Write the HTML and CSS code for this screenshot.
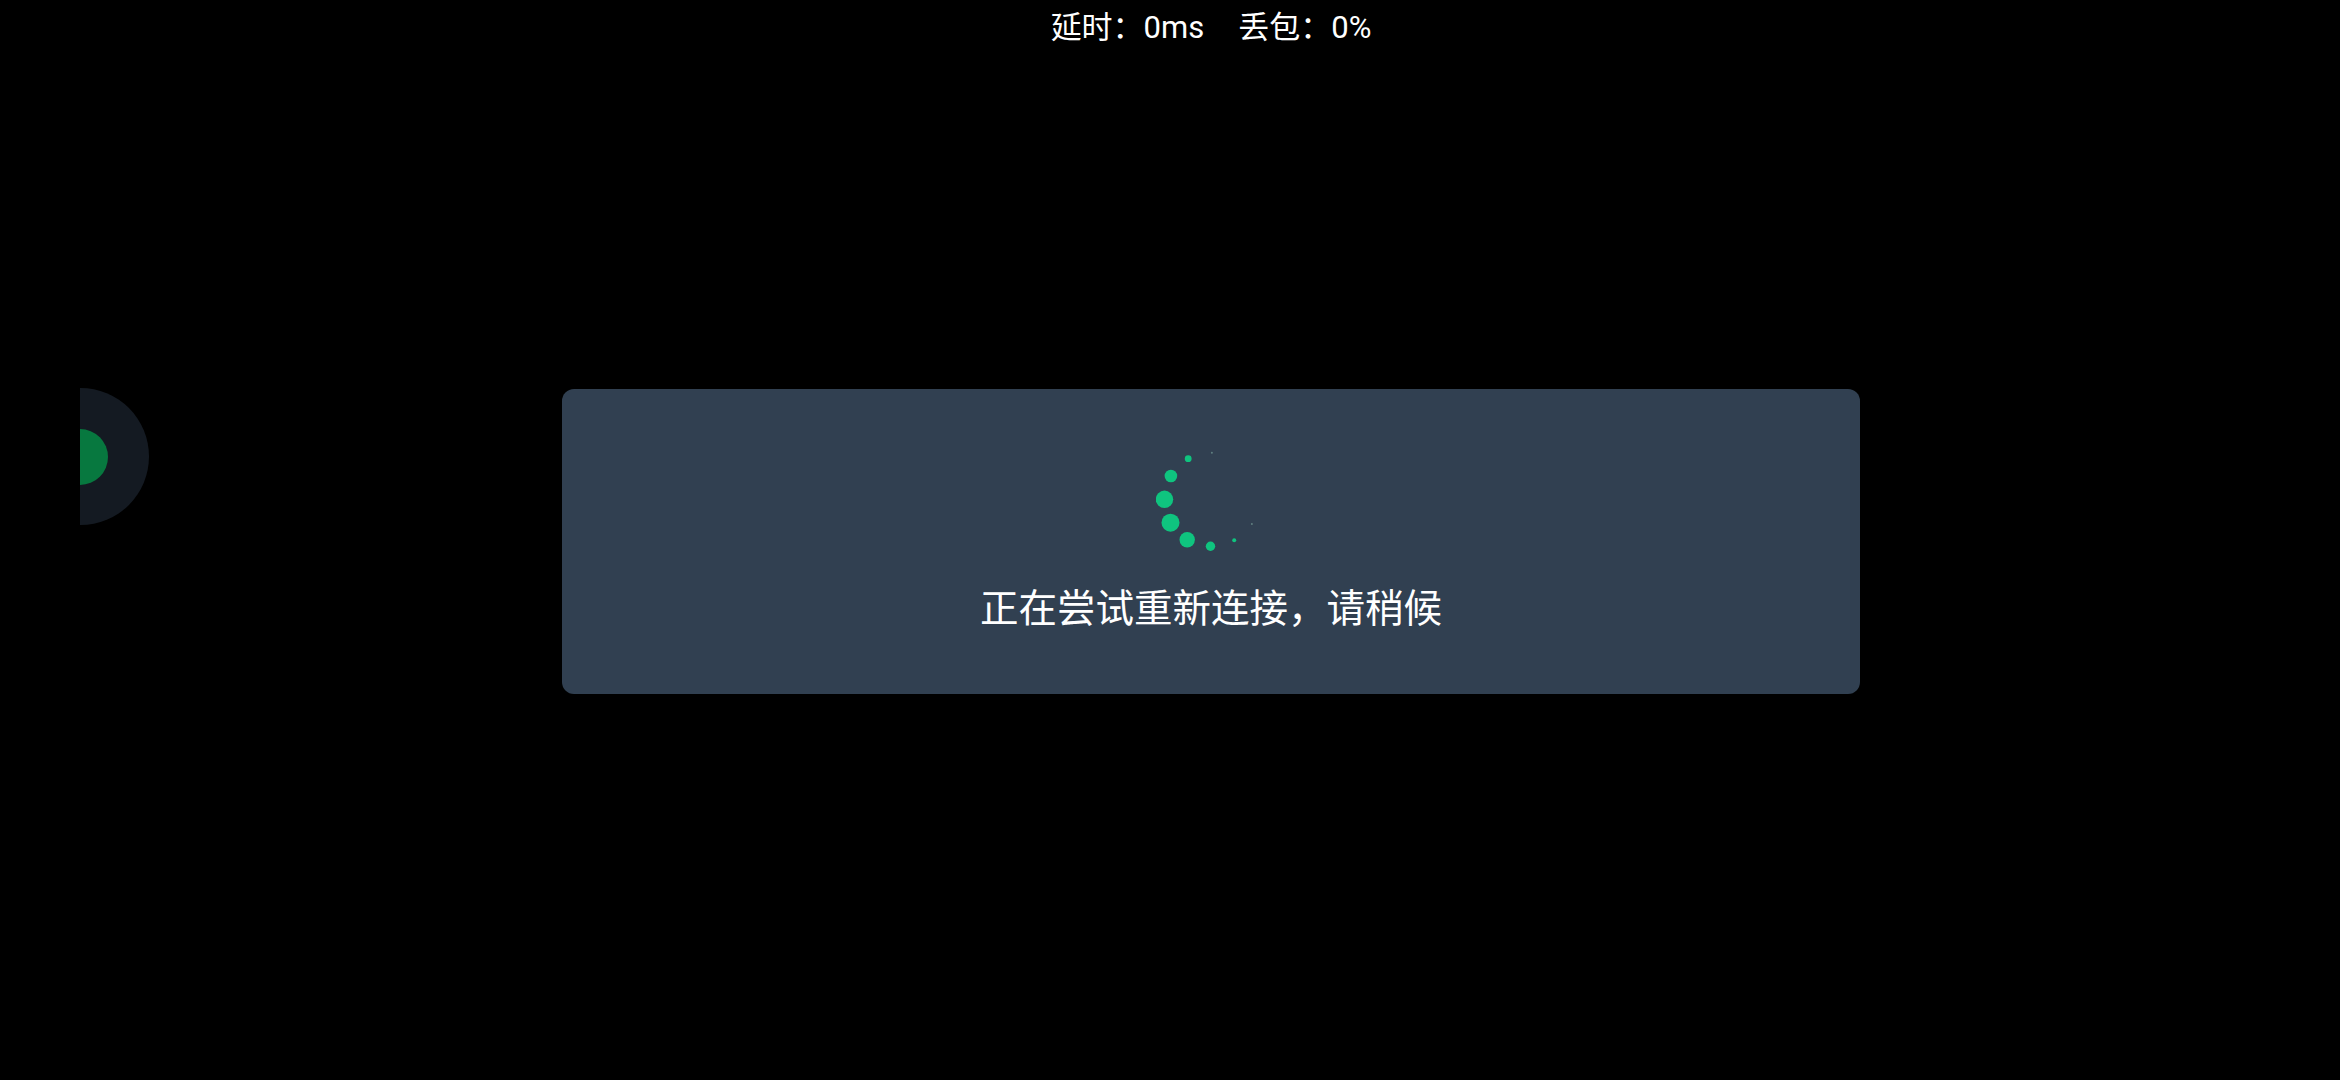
FILE: index.html
```html
<!DOCTYPE html>
<html lang="zh-CN">
<head>
<meta charset="utf-8">
<title>正在尝试重新连接</title>
<link rel="stylesheet" href="styles.css">
</head>
<body>
<main class="stage">
  <div class="stats"><span>延时：0ms</span><span>丢包：0%</span></div>
  <section class="dialog">
    <svg class="spinner" viewBox="-55.7 -55.5 110 110" width="110" height="110" aria-hidden="true">
      <circle cx="0.2" cy="-46.8" r="1" class="faint"/>
      <circle cx="-23.5" cy="-40.8" r="3.4"/>
      <circle cx="-40.8" cy="-23.5" r="6.3"/>
      <circle cx="-47.2" cy="-0.2" r="8.7"/>
      <circle cx="-41.2" cy="23.2" r="9"/>
      <circle cx="-24.5" cy="40.2" r="7.7"/>
      <circle cx="-1.2" cy="46.8" r="4.7"/>
      <circle cx="22.5" cy="40.8" r="2"/>
      <circle cx="40.2" cy="24.5" r="1" class="faint"/>
    </svg>
    <p class="message">正在尝试重新连接，请稍候</p>
  </section>
  <div class="float-button"><span class="float-dot"></span></div>
</main>
</body>
</html>
```
FILE: styles.css
```css
* { box-sizing: border-box; }
html, body { margin: 0; height: 100%; background: #000; }
body {
  width: 2340px;
  height: 1080px;
  overflow: hidden;
  font-family: Roboto, "Noto Sans CJK SC", sans-serif;
  color: #fff;
}
.stage {
  position: relative;
  height: 1080px;
  padding-left: 82px;
  display: flex;
  flex-direction: column;
  align-items: center;
}
.stats {
  height: 55px;
  display: flex;
  align-items: center;
  gap: 34px;
  font-size: 31px;
  line-height: 55px;
}
.dialog {
  width: 1298px;
  height: 304.5px;
  margin-top: 334px;
  padding-top: 55px;
  background: #314051;
  border-radius: 12px;
  display: flex;
  flex-direction: column;
  align-items: center;
}
.spinner { display: block; flex: none; }
.spinner circle { fill: #0fc47f; }
.spinner .faint { fill: #7fa8a0; opacity: .6; }
.message {
  margin: 28px 0 0;
  font-size: 38.5px;
  line-height: 54px;
  color: #fff;
}
.float-button {
  position: absolute;
  left: 80px;
  top: 388px;
  width: 69px;
  height: 137px;
  background: #141a22;
  border-radius: 0 69px 69px 0;
  display: flex;
  align-items: center;
}
.float-dot {
  width: 28px;
  height: 56px;
  background: #07783f;
  border-radius: 0 28px 28px 0;
}
```
